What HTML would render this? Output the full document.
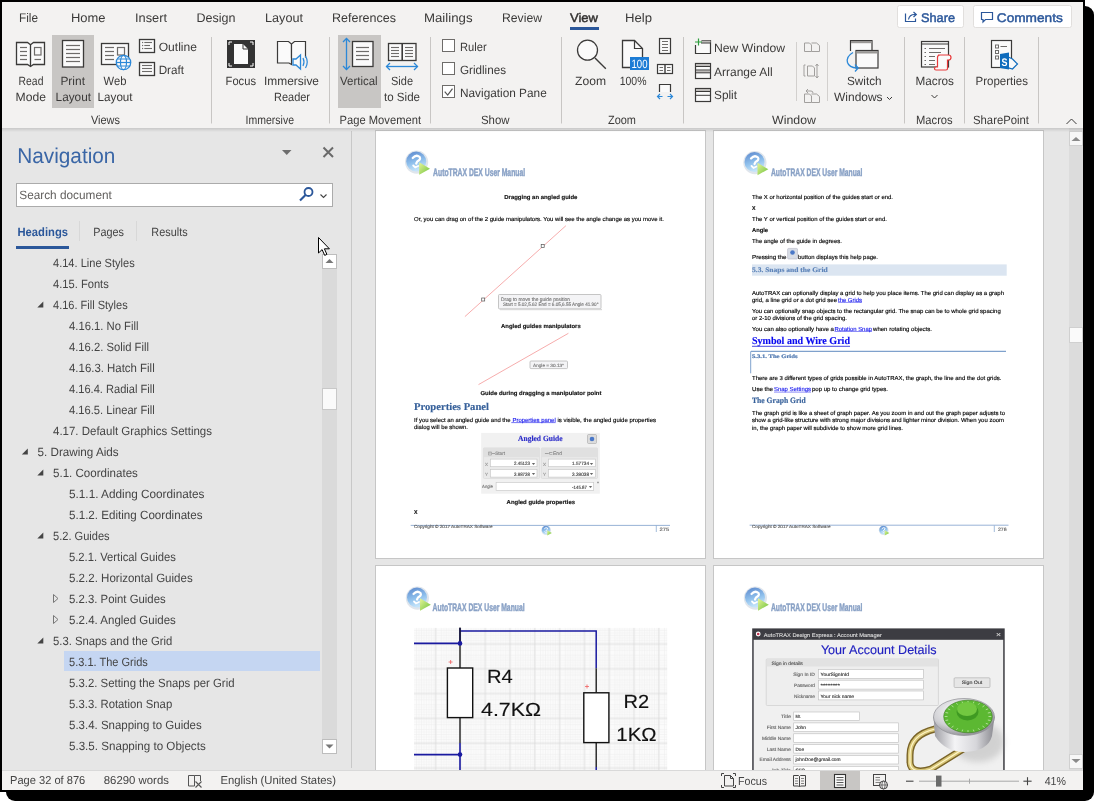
<!DOCTYPE html>
<html><head><meta charset="utf-8"><style>
html,body{margin:0;padding:0;background:#fff;width:1100px;height:807px;overflow:hidden}
svg{display:block;will-change:transform}
svg{font-family:"Liberation Sans",sans-serif}
</style></head><body>
<svg width="1100" height="807" viewBox="0 0 1100 807" text-rendering="geometricPrecision">
<defs><linearGradient id="rshadow" x1="0" y1="0" x2="0" y2="1"><stop offset="0" stop-color="#000" stop-opacity="0.13"/><stop offset="1" stop-color="#000" stop-opacity="0"/></linearGradient>
<linearGradient id="lgb" x1="0" y1="0" x2="0.3" y2="1"><stop offset="0" stop-color="#5a86cc"/><stop offset="0.6" stop-color="#8fc0ec"/><stop offset="1" stop-color="#c4e4fa"/></linearGradient>
<linearGradient id="lgg" x1="0" y1="0" x2="1" y2="1"><stop offset="0" stop-color="#e8f59a"/><stop offset="1" stop-color="#6cc23a"/></linearGradient>
<pattern id="gridp" x="414" y="627.9" width="24.8" height="24.8" patternUnits="userSpaceOnUse">
<rect width="24.8" height="24.8" fill="#fbfbfb"/>
<path d="M2.48 0V24.8M4.96 0V24.8M7.44 0V24.8M9.92 0V24.8M12.40 0V24.8M14.88 0V24.8M17.36 0V24.8M19.84 0V24.8M22.32 0V24.8M0 2.48H24.8M0 4.96H24.8M0 7.44H24.8M0 9.92H24.8M0 12.40H24.8M0 14.88H24.8M0 17.36H24.8M0 19.84H24.8M0 22.32H24.8" stroke="#ededed" stroke-width="0.5"/>
<path d="M21.6 0V24.8M0 16H24.8" stroke="#d8d8d8" stroke-width="0.7"/>
</pattern>
<radialGradient id="lockr" cx="0.4" cy="0.35" r="0.7"><stop offset="0" stop-color="#ffffff"/><stop offset="0.6" stop-color="#d0d0d4"/><stop offset="1" stop-color="#8a8a90"/></radialGradient>
<radialGradient id="lockg" cx="0.5" cy="0.45" r="0.6"><stop offset="0" stop-color="#8fd85a"/><stop offset="0.8" stop-color="#5cb832"/><stop offset="1" stop-color="#3e8a20"/></radialGradient>
<linearGradient id="lockbody" x1="0" y1="0" x2="1" y2="0"><stop offset="0" stop-color="#9c9ca2"/><stop offset="0.35" stop-color="#f4f4f6"/><stop offset="0.7" stop-color="#d6d6da"/><stop offset="1" stop-color="#8a8a90"/></linearGradient>
<filter id="blur3" x="-50%" y="-50%" width="200%" height="200%"><feGaussianBlur stdDeviation="3"/></filter>
</defs>
<rect x="0" y="0" width="1100" height="807" fill="#fff"/>
<rect x="6" y="6" width="1088" height="795" rx="9" ry="9" fill="#000"/>
<rect x="0" y="0" width="1085" height="792" fill="#000" />
<rect x="2" y="2" width="1081" height="126" fill="#f3f2f1" />
<text x="19" y="22" font-size="12.5" fill="#3b3a39" font-weight="normal" style="font-family:&quot;Liberation Sans&quot;" textLength="19.0" lengthAdjust="spacingAndGlyphs" >File</text>
<text x="71" y="22" font-size="12.5" fill="#3b3a39" font-weight="normal" style="font-family:&quot;Liberation Sans&quot;" textLength="34.5" lengthAdjust="spacingAndGlyphs" >Home</text>
<text x="135" y="22" font-size="12.5" fill="#3b3a39" font-weight="normal" style="font-family:&quot;Liberation Sans&quot;" textLength="32.0" lengthAdjust="spacingAndGlyphs" >Insert</text>
<text x="196.5" y="22" font-size="12.5" fill="#3b3a39" font-weight="normal" style="font-family:&quot;Liberation Sans&quot;" textLength="39.0" lengthAdjust="spacingAndGlyphs" >Design</text>
<text x="265" y="22" font-size="12.5" fill="#3b3a39" font-weight="normal" style="font-family:&quot;Liberation Sans&quot;" textLength="38.0" lengthAdjust="spacingAndGlyphs" >Layout</text>
<text x="332" y="22" font-size="12.5" fill="#3b3a39" font-weight="normal" style="font-family:&quot;Liberation Sans&quot;" textLength="64.0" lengthAdjust="spacingAndGlyphs" >References</text>
<text x="424" y="22" font-size="12.5" fill="#3b3a39" font-weight="normal" style="font-family:&quot;Liberation Sans&quot;" textLength="48.5" lengthAdjust="spacingAndGlyphs" >Mailings</text>
<text x="502" y="22" font-size="12.5" fill="#3b3a39" font-weight="normal" style="font-family:&quot;Liberation Sans&quot;" textLength="40.0" lengthAdjust="spacingAndGlyphs" >Review</text>
<text x="625" y="22" font-size="12.5" fill="#3b3a39" font-weight="normal" style="font-family:&quot;Liberation Sans&quot;" textLength="27.0" lengthAdjust="spacingAndGlyphs" >Help</text>
<text x="570" y="22" font-size="12.5" fill="#323130" font-weight="normal" style="font-family:&quot;Liberation Sans&quot;" textLength="28.0" lengthAdjust="spacingAndGlyphs" stroke="#323130" stroke-width="0.45">View</text>
<rect x="570" y="27" width="29" height="3" fill="#2b579a" />
<rect x="897.5" y="5.5" width="66" height="22" rx="2" fill="#fff" stroke="#e1dfdd" stroke-width="1"/>
<rect x="973.5" y="5.5" width="98" height="22" rx="2" fill="#fff" stroke="#e1dfdd" stroke-width="1"/>
<text x="921" y="21.5" font-size="12.5" fill="#2b579a" font-weight="normal" style="font-family:&quot;Liberation Sans&quot;" textLength="34.0" lengthAdjust="spacingAndGlyphs" stroke="#2b579a" stroke-width="0.45">Share</text>
<text x="996.8" y="21.5" font-size="12.5" fill="#2b579a" font-weight="normal" style="font-family:&quot;Liberation Sans&quot;" textLength="66.0" lengthAdjust="spacingAndGlyphs" stroke="#2b579a" stroke-width="0.45">Comments</text>
<path d="M905.5 13.5 v8 h10 v-3" fill="none" stroke="#2b579a" stroke-width="1.2"/>
<path d="M908.5 19.5 q1 -5 6 -5 h1.5 M913.5 12 l2.8 2.5 l-2.8 2.5" fill="none" stroke="#2b579a" stroke-width="1.2"/>
<path d="M981.5 12.5 h11 v7 h-7 l-2.5 2.5 v-2.5 h-1.5 z" fill="none" stroke="#2b579a" stroke-width="1.2"/>
<rect x="52" y="35" width="42" height="73" fill="#c8c6c4" />
<rect x="338" y="35" width="43" height="73" fill="#c8c6c4" />
<line x1="211.5" y1="37" x2="211.5" y2="123.5" stroke="#c8c6c4" stroke-width="1" />
<line x1="329.5" y1="37" x2="329.5" y2="123.5" stroke="#c8c6c4" stroke-width="1" />
<line x1="430.5" y1="37" x2="430.5" y2="123.5" stroke="#c8c6c4" stroke-width="1" />
<line x1="561.5" y1="37" x2="561.5" y2="123.5" stroke="#c8c6c4" stroke-width="1" />
<line x1="683.5" y1="37" x2="683.5" y2="123.5" stroke="#c8c6c4" stroke-width="1" />
<line x1="904.5" y1="37" x2="904.5" y2="123.5" stroke="#c8c6c4" stroke-width="1" />
<line x1="964.5" y1="37" x2="964.5" y2="123.5" stroke="#c8c6c4" stroke-width="1" />
<line x1="1038.5" y1="37" x2="1038.5" y2="123.5" stroke="#c8c6c4" stroke-width="1" />
<line x1="796.5" y1="42" x2="796.5" y2="101" stroke="#d2d0ce" stroke-width="1" />
<line x1="827.5" y1="42" x2="827.5" y2="101" stroke="#d2d0ce" stroke-width="1" />
<path d="M16.5 42.5 h11 l3 2.2 l3 -2.2 h11 v22 h-11 l-3 2 l-3 -2 h-11 z" fill="#fafafa" stroke="#3b3a39" stroke-width="1.3"/>
<line x1="30.5" y1="44.5" x2="30.5" y2="66" stroke="#3b3a39" stroke-width="1.3" />
<line x1="20" y1="47.5" x2="27" y2="47.5" stroke="#6e6c6a" stroke-width="1.2" />
<line x1="20" y1="51.5" x2="27" y2="51.5" stroke="#6e6c6a" stroke-width="1.2" />
<line x1="20" y1="55.5" x2="27" y2="55.5" stroke="#6e6c6a" stroke-width="1.2" />
<line x1="20" y1="59.5" x2="27" y2="59.5" stroke="#6e6c6a" stroke-width="1.2" />
<rect x="34.5" y="47.5" width="6.5" height="7.5" fill="none" stroke="#6e6c6a" stroke-width="1.2"/>
<line x1="34.5" y1="59.5" x2="41" y2="59.5" stroke="#6e6c6a" stroke-width="1.2" />
<rect x="62.5" y="40.5" width="21" height="26.5" fill="#fafafa" stroke="#3b3a39" stroke-width="1.3"/>
<line x1="66" y1="45.5" x2="80" y2="45.5" stroke="#6e6c6a" stroke-width="1.2" />
<line x1="66" y1="49.5" x2="80" y2="49.5" stroke="#6e6c6a" stroke-width="1.2" />
<line x1="66" y1="53.5" x2="80" y2="53.5" stroke="#6e6c6a" stroke-width="1.2" />
<line x1="66" y1="57.5" x2="80" y2="57.5" stroke="#6e6c6a" stroke-width="1.2" />
<line x1="66" y1="61.5" x2="80" y2="61.5" stroke="#6e6c6a" stroke-width="1.2" />
<rect x="101.5" y="43.5" width="27" height="21" fill="#fafafa" stroke="#3b3a39" stroke-width="1.3"/>
<line x1="105" y1="47.5" x2="114" y2="47.5" stroke="#6e6c6a" stroke-width="1.2" />
<line x1="105" y1="51.5" x2="114" y2="51.5" stroke="#6e6c6a" stroke-width="1.2" />
<line x1="105" y1="55.5" x2="114" y2="55.5" stroke="#6e6c6a" stroke-width="1.2" />
<line x1="105" y1="59.5" x2="114" y2="59.5" stroke="#6e6c6a" stroke-width="1.2" />
<rect x="117.5" y="47.5" width="7" height="7.5" fill="none" stroke="#6e6c6a" stroke-width="1.2"/>
<circle cx="123.5" cy="62.5" r="7.2" fill="#fafafa" stroke="#2b88d8" stroke-width="1.3"/>
<ellipse cx="123.5" cy="62.5" rx="3" ry="7.2" fill="none" stroke="#2b88d8" stroke-width="1.2"/>
<line x1="116.3" y1="62.5" x2="130.7" y2="62.5" stroke="#2b88d8" stroke-width="1.2" />
<line x1="117.5" y1="59" x2="129.5" y2="59" stroke="#2b88d8" stroke-width="1" />
<line x1="117.5" y1="66" x2="129.5" y2="66" stroke="#2b88d8" stroke-width="1" />
<rect x="139.5" y="39.5" width="15" height="13" fill="#fafafa" stroke="#3b3a39" stroke-width="1.3"/>
<line x1="144.3" y1="42.5" x2="152" y2="42.5" stroke="#6e6c6a" stroke-width="1.1" />
<rect x="142" y="41.9" width="1.2" height="1.2" fill="#6e6c6a" />
<line x1="144.3" y1="45.5" x2="150" y2="45.5" stroke="#6e6c6a" stroke-width="1.1" />
<rect x="142" y="44.9" width="1.2" height="1.2" fill="#6e6c6a" />
<line x1="144.3" y1="48.5" x2="152" y2="48.5" stroke="#6e6c6a" stroke-width="1.1" />
<rect x="142" y="47.9" width="1.2" height="1.2" fill="#6e6c6a" />
<rect x="139.5" y="62.5" width="15" height="13" fill="#fafafa" stroke="#3b3a39" stroke-width="1.3"/>
<line x1="142" y1="65.5" x2="152" y2="65.5" stroke="#6e6c6a" stroke-width="1.1" />
<line x1="142" y1="68.5" x2="152" y2="68.5" stroke="#6e6c6a" stroke-width="1.1" />
<line x1="142" y1="71.5" x2="152" y2="71.5" stroke="#6e6c6a" stroke-width="1.1" />
<text x="158.7" y="50.6" font-size="12" fill="#3b3a39" font-weight="normal" style="font-family:&quot;Liberation Sans&quot;" textLength="38.3" lengthAdjust="spacingAndGlyphs" >Outline</text>
<text x="158.7" y="73.7" font-size="12" fill="#3b3a39" font-weight="normal" style="font-family:&quot;Liberation Sans&quot;" textLength="25.3" lengthAdjust="spacingAndGlyphs" >Draft</text>
<text x="18.6" y="85" font-size="12" fill="#3b3a39" font-weight="normal" style="font-family:&quot;Liberation Sans&quot;" textLength="24.8" lengthAdjust="spacingAndGlyphs" >Read</text>
<text x="15.6" y="101" font-size="12" fill="#3b3a39" font-weight="normal" style="font-family:&quot;Liberation Sans&quot;" textLength="30.4" lengthAdjust="spacingAndGlyphs" >Mode</text>
<text x="60.4" y="85" font-size="12" fill="#3b3a39" font-weight="normal" style="font-family:&quot;Liberation Sans&quot;" textLength="24.6" lengthAdjust="spacingAndGlyphs" >Print</text>
<text x="55.6" y="101" font-size="12" fill="#3b3a39" font-weight="normal" style="font-family:&quot;Liberation Sans&quot;" textLength="35.4" lengthAdjust="spacingAndGlyphs" >Layout</text>
<text x="103.6" y="85" font-size="12" fill="#3b3a39" font-weight="normal" style="font-family:&quot;Liberation Sans&quot;" textLength="22.8" lengthAdjust="spacingAndGlyphs" >Web</text>
<text x="97.6" y="101" font-size="12" fill="#3b3a39" font-weight="normal" style="font-family:&quot;Liberation Sans&quot;" textLength="35.0" lengthAdjust="spacingAndGlyphs" >Layout</text>
<text x="91" y="124" font-size="12" fill="#3b3a39" font-weight="normal" style="font-family:&quot;Liberation Sans&quot;" textLength="29.0" lengthAdjust="spacingAndGlyphs" >Views</text>
<rect x="227" y="40" width="28" height="28" fill="#333" />
<path d="M234 44 h9 l5 5 v15 h-14 z" fill="#fafafa"/>
<path d="M243 44 v5 h5" fill="none" stroke="#333" stroke-width="1"/>
<path d="M229 45 v-3 h3" fill="none" stroke="#fff" stroke-width="1"/>
<path d="M253 45 v-3 h-3" fill="none" stroke="#fff" stroke-width="1"/>
<path d="M229 63 v3 h3" fill="none" stroke="#fff" stroke-width="1"/>
<path d="M253 63 v3 h-3" fill="none" stroke="#fff" stroke-width="1"/>
<path d="M277.5 41.5 h11 l3 2.5 v20.5 l-2.5 -1.5 h-11.5 z" fill="#fafafa" stroke="#3b3a39" stroke-width="1.2"/>
<path d="M291.5 58 v-14 l3 -2.5 h11 v16" fill="#fafafa" stroke="#3b3a39" stroke-width="1.2"/>
<path d="M293 59 h3 l4.5 -4 v14 l-4.5 -4 h-3 z" fill="#fafafa" stroke="#2b88d8" stroke-width="1.3"/>
<path d="M303 58 q2 4 0 8 M305.5 56 q3.5 6 0 12" fill="none" stroke="#2b88d8" stroke-width="1.2"/>
<text x="225.6" y="85" font-size="12" fill="#3b3a39" font-weight="normal" style="font-family:&quot;Liberation Sans&quot;" textLength="30.4" lengthAdjust="spacingAndGlyphs" >Focus</text>
<text x="264" y="85" font-size="12" fill="#3b3a39" font-weight="normal" style="font-family:&quot;Liberation Sans&quot;" textLength="55.0" lengthAdjust="spacingAndGlyphs" >Immersive</text>
<text x="274" y="101" font-size="12" fill="#3b3a39" font-weight="normal" style="font-family:&quot;Liberation Sans&quot;" textLength="36.0" lengthAdjust="spacingAndGlyphs" >Reader</text>
<text x="245.6" y="124" font-size="12" fill="#3b3a39" font-weight="normal" style="font-family:&quot;Liberation Sans&quot;" textLength="48.4" lengthAdjust="spacingAndGlyphs" >Immersive</text>
<line x1="346.5" y1="38.5" x2="346.5" y2="69.5" stroke="#2b88d8" stroke-width="1.3" />
<path d="M343 42 l3.5 -3.5 l3.5 3.5 M343 66 l3.5 3.5 l3.5 -3.5" fill="none" stroke="#2b88d8" stroke-width="1.3"/>
<rect x="352.5" y="41.5" width="20.5" height="25" fill="#fafafa" stroke="#3b3a39" stroke-width="1.3"/>
<line x1="356" y1="47.5" x2="369" y2="47.5" stroke="#6e6c6a" stroke-width="1.2" />
<line x1="356" y1="51.5" x2="369" y2="51.5" stroke="#6e6c6a" stroke-width="1.2" />
<line x1="356" y1="55.5" x2="369" y2="55.5" stroke="#6e6c6a" stroke-width="1.2" />
<line x1="356" y1="59.5" x2="369" y2="59.5" stroke="#6e6c6a" stroke-width="1.2" />
<rect x="388.5" y="43.5" width="27.5" height="17" fill="#fafafa" stroke="#3b3a39" stroke-width="1.3"/>
<line x1="402.2" y1="43.5" x2="402.2" y2="60.5" stroke="#3b3a39" stroke-width="1.6" />
<line x1="391" y1="47.5" x2="399" y2="47.5" stroke="#6e6c6a" stroke-width="1.1" />
<line x1="405" y1="47.5" x2="413" y2="47.5" stroke="#6e6c6a" stroke-width="1.1" />
<line x1="391" y1="50.5" x2="399" y2="50.5" stroke="#6e6c6a" stroke-width="1.1" />
<line x1="405" y1="50.5" x2="413" y2="50.5" stroke="#6e6c6a" stroke-width="1.1" />
<line x1="391" y1="53.5" x2="399" y2="53.5" stroke="#6e6c6a" stroke-width="1.1" />
<line x1="405" y1="53.5" x2="413" y2="53.5" stroke="#6e6c6a" stroke-width="1.1" />
<line x1="391" y1="56.5" x2="399" y2="56.5" stroke="#6e6c6a" stroke-width="1.1" />
<line x1="405" y1="56.5" x2="413" y2="56.5" stroke="#6e6c6a" stroke-width="1.1" />
<line x1="386.5" y1="66.5" x2="417.5" y2="66.5" stroke="#2b88d8" stroke-width="1.3" />
<path d="M390 63 l-3.5 3.5 l3.5 3.5 M414 63 l3.5 3.5 l-3.5 3.5" fill="none" stroke="#2b88d8" stroke-width="1.3"/>
<text x="340" y="85" font-size="12" fill="#3b3a39" font-weight="normal" style="font-family:&quot;Liberation Sans&quot;" textLength="37.6" lengthAdjust="spacingAndGlyphs" >Vertical</text>
<text x="391" y="85" font-size="12" fill="#3b3a39" font-weight="normal" style="font-family:&quot;Liberation Sans&quot;" textLength="22.0" lengthAdjust="spacingAndGlyphs" >Side</text>
<text x="384" y="101" font-size="12" fill="#3b3a39" font-weight="normal" style="font-family:&quot;Liberation Sans&quot;" textLength="36.0" lengthAdjust="spacingAndGlyphs" >to Side</text>
<text x="339.6" y="124" font-size="12" fill="#3b3a39" font-weight="normal" style="font-family:&quot;Liberation Sans&quot;" textLength="81.4" lengthAdjust="spacingAndGlyphs" >Page Movement</text>
<rect x="442.5" y="39.5" width="12" height="12" fill="#fff" stroke="#6e6c6a" stroke-width="1"/>
<rect x="442.5" y="62.5" width="12" height="12" fill="#fff" stroke="#6e6c6a" stroke-width="1"/>
<rect x="442.5" y="85.5" width="12" height="12" fill="#fff" stroke="#6e6c6a" stroke-width="1"/>
<path d="M444.7 91.7 l3 3.4 l4.8 -6.5" fill="none" stroke="#555" stroke-width="1.2"/>
<text x="460" y="51" font-size="12" fill="#3b3a39" font-weight="normal" style="font-family:&quot;Liberation Sans&quot;" textLength="26.7" lengthAdjust="spacingAndGlyphs" >Ruler</text>
<text x="460" y="74" font-size="12" fill="#3b3a39" font-weight="normal" style="font-family:&quot;Liberation Sans&quot;" textLength="46.0" lengthAdjust="spacingAndGlyphs" >Gridlines</text>
<text x="460" y="97" font-size="12" fill="#3b3a39" font-weight="normal" style="font-family:&quot;Liberation Sans&quot;" textLength="86.7" lengthAdjust="spacingAndGlyphs" >Navigation Pane</text>
<text x="481" y="124" font-size="12" fill="#3b3a39" font-weight="normal" style="font-family:&quot;Liberation Sans&quot;" textLength="28.6" lengthAdjust="spacingAndGlyphs" >Show</text>
<circle cx="587.5" cy="50.2" r="10" fill="#fafafa" stroke="#3b3a39" stroke-width="1.3"/>
<line x1="595" y1="58" x2="605.8" y2="68.8" stroke="#3b3a39" stroke-width="1.4" />
<path d="M622.5 40.5 h12 l8 8 v19 h-20 z" fill="#fafafa" stroke="#3b3a39" stroke-width="1.3"/>
<path d="M634.5 40.5 v8 h8" fill="none" stroke="#3b3a39" stroke-width="1.2"/>
<rect x="630" y="57" width="19" height="13" fill="#1c7cd5" />
<text x="631.5" y="68.3" font-size="12" fill="#fff" font-weight="normal" style="font-family:&quot;Liberation Sans&quot;" textLength="16.0" lengthAdjust="spacingAndGlyphs" >100</text>
<text x="575" y="85" font-size="12" fill="#3b3a39" font-weight="normal" style="font-family:&quot;Liberation Sans&quot;" textLength="31.0" lengthAdjust="spacingAndGlyphs" >Zoom</text>
<text x="619.7" y="85" font-size="12" fill="#3b3a39" font-weight="normal" style="font-family:&quot;Liberation Sans&quot;" textLength="26.8" lengthAdjust="spacingAndGlyphs" >100%</text>
<rect x="659.5" y="38.5" width="11" height="15" fill="#fafafa" stroke="#3b3a39" stroke-width="1.2"/>
<line x1="662" y1="41.5" x2="668" y2="41.5" stroke="#6e6c6a" stroke-width="1" />
<line x1="662" y1="44.5" x2="668" y2="44.5" stroke="#6e6c6a" stroke-width="1" />
<line x1="662" y1="47.5" x2="668" y2="47.5" stroke="#6e6c6a" stroke-width="1" />
<line x1="662" y1="50.5" x2="668" y2="50.5" stroke="#6e6c6a" stroke-width="1" />
<rect x="657.5" y="64.5" width="15" height="9" fill="#fafafa" stroke="#3b3a39" stroke-width="1.2"/>
<line x1="665" y1="64.5" x2="665" y2="73.5" stroke="#3b3a39" stroke-width="1.4" />
<line x1="659.5" y1="67.5" x2="663" y2="67.5" stroke="#6e6c6a" stroke-width="1" />
<line x1="667" y1="67.5" x2="670.5" y2="67.5" stroke="#6e6c6a" stroke-width="1" />
<line x1="659.5" y1="70.5" x2="663" y2="70.5" stroke="#6e6c6a" stroke-width="1" />
<line x1="667" y1="70.5" x2="670.5" y2="70.5" stroke="#6e6c6a" stroke-width="1" />
<path d="M659.5 92 v-7.5 h11 v7.5" fill="#fafafa" stroke="#3b3a39" stroke-width="1.2"/>
<path d="M657.5 96.5 h5 M660 94 l-2.5 2.5 l2.5 2.5 M667.5 96.5 h5 M670 94 l2.5 2.5 l-2.5 2.5" fill="none" stroke="#2b88d8" stroke-width="1.2"/>
<text x="608" y="124" font-size="12" fill="#3b3a39" font-weight="normal" style="font-family:&quot;Liberation Sans&quot;" textLength="28.0" lengthAdjust="spacingAndGlyphs" >Zoom</text>
<path d="M695.5 45 v8.5 h15 v-13 h-9" fill="#fafafa" stroke="#3b3a39" stroke-width="1.2"/>
<rect x="701" y="40.6" width="9.5" height="2" fill="#bdbbb9" />
<line x1="701" y1="43" x2="710.5" y2="43" stroke="#3b3a39" stroke-width="1" />
<path d="M698.5 38.5 v7 M695 42 h7" fill="none" stroke="#2e9e3e" stroke-width="1.2"/>
<rect x="695.5" y="63.5" width="15" height="15" fill="#fafafa" stroke="#3b3a39" stroke-width="1.2"/>
<rect x="696" y="64" width="14" height="2.5" fill="#bdbbb9" />
<line x1="695.5" y1="66.5" x2="710.5" y2="66.5" stroke="#3b3a39" stroke-width="1" />
<rect x="696" y="70.5" width="14" height="2" fill="#bdbbb9" />
<line x1="695.5" y1="70" x2="710.5" y2="70" stroke="#3b3a39" stroke-width="1" />
<line x1="695.5" y1="72.8" x2="710.5" y2="72.8" stroke="#3b3a39" stroke-width="1" />
<rect x="695.5" y="88.5" width="15" height="13" fill="#fafafa" stroke="#3b3a39" stroke-width="1.2"/>
<rect x="696" y="89" width="14" height="2.3" fill="#bdbbb9" />
<line x1="695.5" y1="91.5" x2="710.5" y2="91.5" stroke="#3b3a39" stroke-width="1" />
<line x1="695.5" y1="95.3" x2="710.5" y2="95.3" stroke="#3b3a39" stroke-width="1" />
<text x="714" y="51.5" font-size="12" fill="#3b3a39" font-weight="normal" style="font-family:&quot;Liberation Sans&quot;" textLength="71.0" lengthAdjust="spacingAndGlyphs" >New Window</text>
<text x="714" y="75.6" font-size="12" fill="#3b3a39" font-weight="normal" style="font-family:&quot;Liberation Sans&quot;" textLength="58.6" lengthAdjust="spacingAndGlyphs" >Arrange All</text>
<text x="714" y="99" font-size="12" fill="#3b3a39" font-weight="normal" style="font-family:&quot;Liberation Sans&quot;" textLength="23.0" lengthAdjust="spacingAndGlyphs" >Split</text>
<path d="M804.5 43 h5 l2 2 v6.5 h-7 z M811.5 43 h5 l3 2.5 v6 h-8" fill="none" stroke="#a19f9d" stroke-width="1"/>
<path d="M805.5 65 h-1.5 v11 h1.5 M807.5 66 h5 l2 2 v8 h-7 z M817 64 v14 M815.5 66 l1.5 -2 l1.5 2 M815.5 76 l1.5 2 l1.5 -2" fill="none" stroke="#a19f9d" stroke-width="1"/>
<path d="M804.5 94 h5 l2 2 v6.5 h-7 z M811.5 94 h5 l3 2.5 v6 h-8 M806 91 h5 q2 0 2 2 M806 91 l2 -2 M806 91 l2 2" fill="none" stroke="#a19f9d" stroke-width="1"/>
<path d="M850.5 51 v-10.5 h21.5 v9.5" fill="#fafafa" stroke="#3b3a39" stroke-width="1.2"/>
<rect x="851" y="41" width="20.5" height="2.2" fill="#9a9896" />
<rect x="856" y="50.5" width="22" height="17.5" fill="#fafafa" stroke="#3b3a39" stroke-width="1.2"/>
<rect x="856.6" y="51.1" width="20.8" height="2.4" fill="#9a9896" />
<path d="M853 52.5 q-7 4 -5.5 10 q1.5 5 9.5 5.5" fill="none" stroke="#2b88d8" stroke-width="1.3"/>
<path d="M855 64.5 l3.2 3.5 l-3.2 3.5" fill="none" stroke="#2b88d8" stroke-width="1.3"/>
<text x="847" y="85" font-size="12" fill="#3b3a39" font-weight="normal" style="font-family:&quot;Liberation Sans&quot;" textLength="34.6" lengthAdjust="spacingAndGlyphs" >Switch</text>
<text x="834" y="101" font-size="12" fill="#3b3a39" font-weight="normal" style="font-family:&quot;Liberation Sans&quot;" textLength="48.6" lengthAdjust="spacingAndGlyphs" >Windows</text>
<path d="M887 97 l2.5 2.5 l2.5 -2.5" fill="none" stroke="#3b3a39" stroke-width="1"/>
<text x="772" y="124" font-size="12" fill="#3b3a39" font-weight="normal" style="font-family:&quot;Liberation Sans&quot;" textLength="44.0" lengthAdjust="spacingAndGlyphs" >Window</text>
<rect x="921.5" y="41.5" width="27" height="25.5" fill="#fafafa" stroke="#3b3a39" stroke-width="1.2"/>
<line x1="921.5" y1="44" x2="948.5" y2="44" stroke="#3b3a39" stroke-width="1" />
<line x1="924.5" y1="48.5" x2="926" y2="48.5" stroke="#6e6c6a" stroke-width="1" />
<line x1="929" y1="48.5" x2="945" y2="48.5" stroke="#6e6c6a" stroke-width="1" />
<line x1="924.5" y1="52.5" x2="926" y2="52.5" stroke="#6e6c6a" stroke-width="1" />
<line x1="929" y1="52.5" x2="941" y2="52.5" stroke="#6e6c6a" stroke-width="1" />
<line x1="924.5" y1="56.5" x2="926" y2="56.5" stroke="#6e6c6a" stroke-width="1" />
<line x1="929" y1="56.5" x2="935" y2="56.5" stroke="#6e6c6a" stroke-width="1" />
<line x1="924.5" y1="60.5" x2="926" y2="60.5" stroke="#6e6c6a" stroke-width="1" />
<line x1="929" y1="60.5" x2="935" y2="60.5" stroke="#6e6c6a" stroke-width="1" />
<line x1="924.5" y1="64.5" x2="926" y2="64.5" stroke="#6e6c6a" stroke-width="1" />
<line x1="929" y1="64.5" x2="935" y2="64.5" stroke="#6e6c6a" stroke-width="1" />
<path d="M938 55 h10.5 q2.5 0 2.5 2.5 q0 2.5 -2.5 2.5 h-1 v8.5 q0 1.5 -1.5 1.5 h-10 q-1.5 0 -1.5 -1.5 q0 -1.5 1.5 -1.5 h1.5 v-9.5 q0 -2.5 2.5 -2.5" fill="#fafafa" stroke="#e8393a" stroke-width="1.2"/>
<text x="915.5" y="85" font-size="12" fill="#3b3a39" font-weight="normal" style="font-family:&quot;Liberation Sans&quot;" textLength="38.5" lengthAdjust="spacingAndGlyphs" >Macros</text>
<path d="M931.5 95 l3 3 l3 -3" fill="none" stroke="#3b3a39" stroke-width="1"/>
<text x="916" y="124" font-size="12" fill="#3b3a39" font-weight="normal" style="font-family:&quot;Liberation Sans&quot;" textLength="36.7" lengthAdjust="spacingAndGlyphs" >Macros</text>
<rect x="991.5" y="40.5" width="20" height="27" fill="#fafafa" stroke="#3b3a39" stroke-width="1.2"/>
<rect x="995.5" y="45" width="3" height="3" fill="none" stroke="#6e6c6a" stroke-width="1"/>
<rect x="995.5" y="50.5" width="3" height="3" fill="none" stroke="#6e6c6a" stroke-width="1"/>
<rect x="995.5" y="56" width="3" height="3" fill="none" stroke="#6e6c6a" stroke-width="1"/>
<line x1="1000.5" y1="46.5" x2="1007" y2="46.5" stroke="#6e6c6a" stroke-width="1" />
<path d="M1006 56 l6.5 3 l5 5 l-5 5 l-6.5 -2 z" fill="#fafafa" stroke="#0f6cbd" stroke-width="1.2"/>
<path d="M1000 54 l9 -1.5 v17 l-9 -1.5 z" fill="#0f6cbd"/>
<text x="1001.5" y="66" font-size="11" fill="#fff" font-weight="bold" style="font-family:&quot;Liberation Sans&quot;" textLength="6.0" lengthAdjust="spacingAndGlyphs" >S</text>
<text x="975.5" y="85" font-size="12" fill="#3b3a39" font-weight="normal" style="font-family:&quot;Liberation Sans&quot;" textLength="52.5" lengthAdjust="spacingAndGlyphs" >Properties</text>
<text x="973" y="124" font-size="12" fill="#3b3a39" font-weight="normal" style="font-family:&quot;Liberation Sans&quot;" textLength="56.0" lengthAdjust="spacingAndGlyphs" >SharePoint</text>
<path d="M1066.5 124 l5 -5 l5 5" fill="none" stroke="#3b3a39" stroke-width="1"/>
<rect x="2" y="128" width="350" height="642" fill="#e6e6e6" />
<line x1="351.5" y1="131" x2="351.5" y2="768" stroke="#c8c8c8" stroke-width="1" />
<text x="17.2" y="163" font-size="21.5" fill="#3a66a6" font-weight="normal" style="font-family:&quot;Liberation Sans&quot;" textLength="98.2" lengthAdjust="spacingAndGlyphs" >Navigation</text>
<path d="M282 150 h9.5 l-4.75 5 z" fill="#6e6e6e"/>
<path d="M323.5 147.5 l9.5 9.5 M333 147.5 l-9.5 9.5" fill="none" stroke="#6a6a6a" stroke-width="2"/>
<rect x="16.5" y="183.5" width="316" height="23" fill="#fff" stroke="#ababab" stroke-width="1"/>
<text x="19.3" y="199.2" font-size="12" fill="#605e5c" font-weight="normal" style="font-family:&quot;Liberation Sans&quot;" textLength="92.5" lengthAdjust="spacingAndGlyphs" >Search document</text>
<circle cx="308.5" cy="192" r="4" fill="none" stroke="#2b579a" stroke-width="1.8"/>
<line x1="305.5" y1="195" x2="300" y2="200.5" stroke="#2b579a" stroke-width="2.2" />
<path d="M320.5 194.5 l3 3 l3 -3" fill="none" stroke="#444" stroke-width="1.1"/>
<text x="17.5" y="236" font-size="12" fill="#2b579a" font-weight="bold" style="font-family:&quot;Liberation Sans&quot;" textLength="50.5" lengthAdjust="spacingAndGlyphs" >Headings</text>
<text x="93.3" y="236" font-size="12" fill="#444" font-weight="normal" style="font-family:&quot;Liberation Sans&quot;" textLength="30.7" lengthAdjust="spacingAndGlyphs" >Pages</text>
<text x="151.3" y="236" font-size="12" fill="#444" font-weight="normal" style="font-family:&quot;Liberation Sans&quot;" textLength="36.3" lengthAdjust="spacingAndGlyphs" >Results</text>
<line x1="79.5" y1="221" x2="79.5" y2="241" stroke="#d8d8d8" stroke-width="1" />
<line x1="136.5" y1="221" x2="136.5" y2="241" stroke="#d8d8d8" stroke-width="1" />
<rect x="16" y="246" width="53" height="3" fill="#2b579a" />
<rect x="322" y="254" width="15" height="500" fill="#dadada" />
<rect x="322.5" y="254.5" width="14" height="14" fill="#fff" stroke="#bdbdbd" stroke-width="1"/>
<path d="M325.5 263 h8 l-4 -4 z" fill="#777"/>
<rect x="322.5" y="739.5" width="14" height="14" fill="#fff" stroke="#bdbdbd" stroke-width="1"/>
<path d="M325.5 744.5 h8 l-4 4 z" fill="#777"/>
<rect x="322.5" y="388.5" width="14" height="21" fill="#fafafa" stroke="#c8c8c8" stroke-width="1"/>
<rect x="64" y="651" width="256" height="20" fill="#c5d6f2" />
<text x="53" y="267" font-size="12" fill="#444" font-weight="normal" style="font-family:&quot;Liberation Sans&quot;" textLength="81.7" lengthAdjust="spacingAndGlyphs" >4.14. Line Styles</text>
<text x="53" y="288" font-size="12" fill="#444" font-weight="normal" style="font-family:&quot;Liberation Sans&quot;" textLength="55.8" lengthAdjust="spacingAndGlyphs" >4.15. Fonts</text>
<text x="53" y="309" font-size="12" fill="#444" font-weight="normal" style="font-family:&quot;Liberation Sans&quot;" textLength="74.7" lengthAdjust="spacingAndGlyphs" >4.16. Fill Styles</text>
<path d="M43.3 301.5 v6 h-6 z" fill="#444"/>
<text x="69" y="330" font-size="12" fill="#444" font-weight="normal" style="font-family:&quot;Liberation Sans&quot;" textLength="69.5" lengthAdjust="spacingAndGlyphs" >4.16.1. No Fill</text>
<text x="69" y="351" font-size="12" fill="#444" font-weight="normal" style="font-family:&quot;Liberation Sans&quot;" textLength="79.9" lengthAdjust="spacingAndGlyphs" >4.16.2. Solid Fill</text>
<text x="69" y="372" font-size="12" fill="#444" font-weight="normal" style="font-family:&quot;Liberation Sans&quot;" textLength="85.7" lengthAdjust="spacingAndGlyphs" >4.16.3. Hatch Fill</text>
<text x="69" y="393" font-size="12" fill="#444" font-weight="normal" style="font-family:&quot;Liberation Sans&quot;" textLength="85.7" lengthAdjust="spacingAndGlyphs" >4.16.4. Radial Fill</text>
<text x="69" y="414" font-size="12" fill="#444" font-weight="normal" style="font-family:&quot;Liberation Sans&quot;" textLength="85.7" lengthAdjust="spacingAndGlyphs" >4.16.5. Linear Fill</text>
<text x="53" y="435" font-size="12" fill="#444" font-weight="normal" style="font-family:&quot;Liberation Sans&quot;" textLength="159.0" lengthAdjust="spacingAndGlyphs" >4.17. Default Graphics Settings</text>
<text x="37.5" y="456" font-size="12" fill="#444" font-weight="normal" style="font-family:&quot;Liberation Sans&quot;" textLength="81.1" lengthAdjust="spacingAndGlyphs" >5. Drawing Aids</text>
<path d="M27.8 448.5 v6 h-6 z" fill="#444"/>
<text x="53" y="477" font-size="12" fill="#444" font-weight="normal" style="font-family:&quot;Liberation Sans&quot;" textLength="84.9" lengthAdjust="spacingAndGlyphs" >5.1. Coordinates</text>
<path d="M43.3 469.5 v6 h-6 z" fill="#444"/>
<text x="69" y="498" font-size="12" fill="#444" font-weight="normal" style="font-family:&quot;Liberation Sans&quot;" textLength="135.5" lengthAdjust="spacingAndGlyphs" >5.1.1. Adding Coordinates</text>
<text x="69" y="519" font-size="12" fill="#444" font-weight="normal" style="font-family:&quot;Liberation Sans&quot;" textLength="133.6" lengthAdjust="spacingAndGlyphs" >5.1.2. Editing Coordinates</text>
<text x="53" y="540" font-size="12" fill="#444" font-weight="normal" style="font-family:&quot;Liberation Sans&quot;" textLength="56.6" lengthAdjust="spacingAndGlyphs" >5.2. Guides</text>
<path d="M43.3 532.5 v6 h-6 z" fill="#444"/>
<text x="69" y="561" font-size="12" fill="#444" font-weight="normal" style="font-family:&quot;Liberation Sans&quot;" textLength="106.8" lengthAdjust="spacingAndGlyphs" >5.2.1. Vertical Guides</text>
<text x="69" y="582" font-size="12" fill="#444" font-weight="normal" style="font-family:&quot;Liberation Sans&quot;" textLength="123.7" lengthAdjust="spacingAndGlyphs" >5.2.2. Horizontal Guides</text>
<text x="69" y="603" font-size="12" fill="#444" font-weight="normal" style="font-family:&quot;Liberation Sans&quot;" textLength="96.7" lengthAdjust="spacingAndGlyphs" >5.2.3. Point Guides</text>
<path d="M53.5 594.5 l4.5 4 l-4.5 4 z" fill="none" stroke="#777" stroke-width="1"/>
<text x="69" y="624" font-size="12" fill="#444" font-weight="normal" style="font-family:&quot;Liberation Sans&quot;" textLength="106.8" lengthAdjust="spacingAndGlyphs" >5.2.4. Angled Guides</text>
<path d="M53.5 615.5 l4.5 4 l-4.5 4 z" fill="none" stroke="#777" stroke-width="1"/>
<text x="53" y="645" font-size="12" fill="#444" font-weight="normal" style="font-family:&quot;Liberation Sans&quot;" textLength="119.2" lengthAdjust="spacingAndGlyphs" >5.3. Snaps and the Grid</text>
<path d="M43.3 637.5 v6 h-6 z" fill="#444"/>
<text x="69" y="666" font-size="12" fill="#444" font-weight="normal" style="font-family:&quot;Liberation Sans&quot;" textLength="78.8" lengthAdjust="spacingAndGlyphs" >5.3.1. The Grids</text>
<text x="69" y="687" font-size="12" fill="#444" font-weight="normal" style="font-family:&quot;Liberation Sans&quot;" textLength="165.5" lengthAdjust="spacingAndGlyphs" >5.3.2. Setting the Snaps per Grid</text>
<text x="69" y="708" font-size="12" fill="#444" font-weight="normal" style="font-family:&quot;Liberation Sans&quot;" textLength="103.2" lengthAdjust="spacingAndGlyphs" >5.3.3. Rotation Snap</text>
<text x="69" y="729" font-size="12" fill="#444" font-weight="normal" style="font-family:&quot;Liberation Sans&quot;" textLength="132.7" lengthAdjust="spacingAndGlyphs" >5.3.4. Snapping to Guides</text>
<text x="69" y="750" font-size="12" fill="#444" font-weight="normal" style="font-family:&quot;Liberation Sans&quot;" textLength="136.7" lengthAdjust="spacingAndGlyphs" >5.3.5. Snapping to Objects</text>
<path d="M318.5 237.5 v15.5 l3.6 -3.4 l2.6 5.8 l2.2 -1 l-2.5 -5.6 h5 z" fill="#fff" stroke="#000" stroke-width="1"/>
<rect x="352" y="128" width="717" height="642" fill="#e6e6e6" />
<rect x="375.5" y="130.5" width="330" height="428" fill="#fff" stroke="#c6c6c6" stroke-width="1"/>
<rect x="713.5" y="130.5" width="330" height="428" fill="#fff" stroke="#c6c6c6" stroke-width="1"/>
<rect x="375.5" y="565.5" width="330" height="206" fill="#fff" stroke="#c6c6c6" stroke-width="1"/>
<rect x="713.5" y="565.5" width="330" height="206" fill="#fff" stroke="#c6c6c6" stroke-width="1"/>
<circle cx="416.59999999999997" cy="162.1" r="11.6" fill="#dfe5ec"/>
<circle cx="416.2" cy="161.5" r="10.0" fill="url(#lgb)"/>
<path d="M412.7 158.0 q3.5 -4.0 7.0 -1.0 q1.5 2.5 -2.5 4.5 l-1.0 2.0" fill="none" stroke="#fff" stroke-width="2.2" stroke-linecap="round"/>
<path d="M413.2 165.5 l2.0 2.0 l3.0 -1.5" fill="none" stroke="#fff" stroke-width="1.8" stroke-linecap="round"/>
<path d="M419.2 162.3 l10.8 6.4 l-10.8 6.0 z" fill="url(#lgg)"/>
<text x="433.1" y="175.9" font-size="10.8" font-weight="bold" fill="#8aa2c6" stroke="#8aa2c6" stroke-width="0.45" textLength="92" lengthAdjust="spacingAndGlyphs" style="font-family:&quot;Liberation Sans&quot;">AutoTRAX DEX User Manual</text>
<text x="504.3" y="199" font-size="5.8" fill="#111" font-weight="bold" style="font-family:&quot;Liberation Sans&quot;" textLength="73.1" lengthAdjust="spacingAndGlyphs" stroke="#111" stroke-width="0.14">Dragging an angled guide</text>
<text x="414" y="220.6" font-size="5.8" fill="#000" font-weight="normal" style="font-family:&quot;Liberation Sans&quot;" textLength="249.9" lengthAdjust="spacingAndGlyphs" stroke="#000" stroke-width="0.14">Or, you can drag on of the 2 guide manipulators. You will see the angle change as you move it.</text>
<line x1="464.9" y1="316.6" x2="565.9" y2="225.7" stroke="#f5a3a3" stroke-width="0.9" />
<rect x="541.2" y="244.6" width="3" height="3" fill="#fff" stroke="#555" stroke-width="0.7"/>
<rect x="481.7" y="298" width="3" height="3" fill="#fff" stroke="#555" stroke-width="0.7"/>
<rect x="498.5" y="294.5" width="102.5" height="14.4" rx="1" fill="#f4f4f6" stroke="#b8b8b8" stroke-width="0.8"/>
<rect x="500" y="309" width="102" height="1.2" fill="#d8d8d8"/>
<text x="501" y="300.8" font-size="5" fill="#7a7a7a" font-weight="normal" style="font-family:&quot;Liberation Sans&quot;" textLength="69.0" lengthAdjust="spacingAndGlyphs" stroke="#7a7a7a" stroke-width="0.14">Drag to move the guide position</text>
<text x="503" y="306.4" font-size="5" fill="#7a7a7a" font-weight="normal" style="font-family:&quot;Liberation Sans&quot;" textLength="95.5" lengthAdjust="spacingAndGlyphs" stroke="#7a7a7a" stroke-width="0.14">Start = 5.02,5.62 End = 6.05,6.55 Angle 41.90°</text>
<text x="501" y="328" font-size="5.8" fill="#111" font-weight="bold" style="font-family:&quot;Liberation Sans&quot;" textLength="79.7" lengthAdjust="spacingAndGlyphs" stroke="#111" stroke-width="0.14">Angled guides manipulators</text>
<line x1="478.5" y1="384.6" x2="568.4" y2="333.3" stroke="#f5a3a3" stroke-width="0.9" />
<rect x="530" y="361" width="37.5" height="7.6" rx="1" fill="#f4f4f6" stroke="#b8b8b8" stroke-width="0.8"/>
<text x="533" y="366.5" font-size="4.6" fill="#7a7a7a" font-weight="normal" style="font-family:&quot;Liberation Sans&quot;" textLength="31.0" lengthAdjust="spacingAndGlyphs" stroke="#7a7a7a" stroke-width="0.14">Angle = 30.13°</text>
<text x="480.4" y="394.8" font-size="5.8" fill="#111" font-weight="bold" style="font-family:&quot;Liberation Sans&quot;" textLength="121.1" lengthAdjust="spacingAndGlyphs" stroke="#111" stroke-width="0.14">Guide during dragging a manipulator point</text>
<text x="414" y="410.2" font-size="10.5" fill="#36609a" font-weight="bold" style="font-family:&quot;Liberation Serif&quot;" textLength="75.0" lengthAdjust="spacingAndGlyphs" stroke="#36609a" stroke-width="0.14">Properties Panel</text>
<text x="414" y="421.6" font-size="5.8" fill="#000" font-weight="normal" style="font-family:&quot;Liberation Sans&quot;" textLength="96.6" lengthAdjust="spacingAndGlyphs" stroke="#000" stroke-width="0.14">If you select an angled guide and the</text>
<text x="512.5" y="421.6" font-size="5.8" fill="#1a1aee" font-weight="normal" style="font-family:&quot;Liberation Sans&quot;" textLength="43.2" lengthAdjust="spacingAndGlyphs" stroke="#1a1aee" stroke-width="0.14">Properties panel</text>
<line x1="511.3" y1="422.6" x2="555.7" y2="422.6" stroke="#1a1aee" stroke-width="0.6" />
<text x="557.5" y="421.6" font-size="5.8" fill="#000" font-weight="normal" style="font-family:&quot;Liberation Sans&quot;" textLength="98.5" lengthAdjust="spacingAndGlyphs" stroke="#000" stroke-width="0.14">is visible, the angled guide properties</text>
<text x="414" y="428.8" font-size="5.8" fill="#000" font-weight="normal" style="font-family:&quot;Liberation Sans&quot;" textLength="54.0" lengthAdjust="spacingAndGlyphs" stroke="#000" stroke-width="0.14">dialog will be shown.</text>
<rect x="481.2" y="432.9" width="118.6" height="60.8" fill="#f1f1f1" />
<text x="518.1" y="441.2" font-size="8" fill="#2a2ac8" font-weight="bold" style="font-family:&quot;Liberation Serif&quot;" textLength="44.4" lengthAdjust="spacingAndGlyphs" stroke="#2a2ac8" stroke-width="0.14">Angled Guide</text>
<rect x="587.5" y="434.5" width="9" height="9" rx="1" fill="#dcdcdc" stroke="#a8a8a8" stroke-width="0.6"/>
<circle cx="592" cy="439" r="2.3" fill="#4a78c8"/>
<rect x="483.4" y="447.9" width="56.2" height="30.6" rx="1" fill="#e9e9e9" stroke="#d6d6d6" stroke-width="0.6"/>
<rect x="483.4" y="447.9" width="56.2" height="9.2" fill="#e0e0e0" />
<rect x="541.3" y="447.9" width="56.2" height="30.6" rx="1" fill="#e9e9e9" stroke="#d6d6d6" stroke-width="0.6"/>
<rect x="541.3" y="447.9" width="56.2" height="9.2" fill="#e0e0e0" />
<text x="488" y="455" font-size="5" fill="#888" font-weight="normal" style="font-family:&quot;Liberation Sans&quot;" textLength="17.0" lengthAdjust="spacingAndGlyphs" stroke="#888" stroke-width="0.14">⊡─Start</text>
<text x="545" y="455" font-size="5" fill="#888" font-weight="normal" style="font-family:&quot;Liberation Sans&quot;" textLength="17.0" lengthAdjust="spacingAndGlyphs" stroke="#888" stroke-width="0.14">─⊂End</text>
<rect x="490.4" y="459.1" width="46.60000000000002" height="7.6" fill="#fff" stroke="#c4c4c4" stroke-width="0.6"/>
<rect x="490.4" y="469.5" width="46.60000000000002" height="7.6" fill="#fff" stroke="#c4c4c4" stroke-width="0.6"/>
<rect x="548.5" y="459.1" width="46.89999999999998" height="7.6" fill="#fff" stroke="#c4c4c4" stroke-width="0.6"/>
<rect x="548.5" y="469.5" width="46.89999999999998" height="7.6" fill="#fff" stroke="#c4c4c4" stroke-width="0.6"/>
<text x="485" y="465.5" font-size="4.5" fill="#999" font-weight="normal" style="font-family:&quot;Liberation Sans&quot;" textLength="3.0" lengthAdjust="spacingAndGlyphs" stroke="#999" stroke-width="0.14">X</text>
<text x="485" y="475.5" font-size="4.5" fill="#999" font-weight="normal" style="font-family:&quot;Liberation Sans&quot;" textLength="3.0" lengthAdjust="spacingAndGlyphs" stroke="#999" stroke-width="0.14">Y</text>
<text x="543" y="465.5" font-size="4.5" fill="#999" font-weight="normal" style="font-family:&quot;Liberation Sans&quot;" textLength="3.0" lengthAdjust="spacingAndGlyphs" stroke="#999" stroke-width="0.14">X</text>
<text x="543" y="475.5" font-size="4.5" fill="#999" font-weight="normal" style="font-family:&quot;Liberation Sans&quot;" textLength="3.0" lengthAdjust="spacingAndGlyphs" stroke="#999" stroke-width="0.14">Y</text>
<text x="514" y="465.2" font-size="4.8" fill="#444" font-weight="normal" style="font-family:&quot;Liberation Sans&quot;" textLength="16.0" lengthAdjust="spacingAndGlyphs" stroke="#444" stroke-width="0.14">2.45123</text>
<text x="532" y="465" font-size="4" fill="#666" font-weight="normal" style="font-family:&quot;Liberation Sans&quot;" textLength="3.0" lengthAdjust="spacingAndGlyphs" stroke="#666" stroke-width="0.14">▾</text>
<text x="514" y="475.6" font-size="4.8" fill="#444" font-weight="normal" style="font-family:&quot;Liberation Sans&quot;" textLength="16.0" lengthAdjust="spacingAndGlyphs" stroke="#444" stroke-width="0.14">3.98738</text>
<text x="532" y="475.4" font-size="4" fill="#666" font-weight="normal" style="font-family:&quot;Liberation Sans&quot;" textLength="3.0" lengthAdjust="spacingAndGlyphs" stroke="#666" stroke-width="0.14">▾</text>
<text x="572" y="465.2" font-size="4.8" fill="#444" font-weight="normal" style="font-family:&quot;Liberation Sans&quot;" textLength="17.0" lengthAdjust="spacingAndGlyphs" stroke="#444" stroke-width="0.14">1.57734</text>
<text x="590" y="465" font-size="4" fill="#666" font-weight="normal" style="font-family:&quot;Liberation Sans&quot;" textLength="3.0" lengthAdjust="spacingAndGlyphs" stroke="#666" stroke-width="0.14">▾</text>
<text x="572" y="475.6" font-size="4.8" fill="#444" font-weight="normal" style="font-family:&quot;Liberation Sans&quot;" textLength="17.0" lengthAdjust="spacingAndGlyphs" stroke="#444" stroke-width="0.14">3.39038</text>
<text x="590" y="475.4" font-size="4" fill="#666" font-weight="normal" style="font-family:&quot;Liberation Sans&quot;" textLength="3.0" lengthAdjust="spacingAndGlyphs" stroke="#666" stroke-width="0.14">▾</text>
<rect x="496.1" y="482.3" width="97.6" height="8.2" fill="#fff" stroke="#c4c4c4" stroke-width="0.6"/>
<text x="482.1" y="488" font-size="4.5" fill="#777" font-weight="normal" style="font-family:&quot;Liberation Sans&quot;" textLength="10.8" lengthAdjust="spacingAndGlyphs" stroke="#777" stroke-width="0.14">Angle</text>
<text x="572" y="488.5" font-size="4.8" fill="#444" font-weight="normal" style="font-family:&quot;Liberation Sans&quot;" textLength="15.0" lengthAdjust="spacingAndGlyphs" stroke="#444" stroke-width="0.14">-145.67</text>
<text x="589" y="488.3" font-size="4" fill="#666" font-weight="normal" style="font-family:&quot;Liberation Sans&quot;" textLength="3.0" lengthAdjust="spacingAndGlyphs" stroke="#666" stroke-width="0.14">▾</text>
<text x="597" y="485" font-size="4.5" fill="#666" font-weight="normal" style="font-family:&quot;Liberation Sans&quot;" textLength="2.0" lengthAdjust="spacingAndGlyphs" stroke="#666" stroke-width="0.14">°</text>
<text x="506.6" y="504.2" font-size="5.8" fill="#111" font-weight="bold" style="font-family:&quot;Liberation Sans&quot;" textLength="68.4" lengthAdjust="spacingAndGlyphs" stroke="#111" stroke-width="0.14">Angled guide properties</text>
<text x="414" y="514.2" font-size="5.6" fill="#111" font-weight="bold" style="font-family:&quot;Liberation Sans&quot;" textLength="3.5" lengthAdjust="spacingAndGlyphs" stroke="#111" stroke-width="0.14">X</text>
<line x1="410.7" y1="525.4" x2="670" y2="525.4" stroke="#7da0cc" stroke-width="0.8" />
<text x="414" y="527.8" font-size="4.4" fill="#606060" font-weight="normal" style="font-family:&quot;Liberation Sans&quot;" textLength="78.5" lengthAdjust="spacingAndGlyphs" stroke="#606060" stroke-width="0.14">Copyright © 2017 AutoTRAX Software</text>
<circle cx="546.168" cy="530.252" r="4.872" fill="#dfe5ec"/>
<circle cx="546" cy="530" r="4.2" fill="url(#lgb)"/>
<path d="M544.53 528.53 q1.47 -1.68 2.94 -0.42 q0.63 1.05 -1.05 1.89 l-0.42 0.84" fill="none" stroke="#fff" stroke-width="0.924" stroke-linecap="round"/>
<path d="M544.74 531.68 l0.84 0.84 l1.26 -0.63" fill="none" stroke="#fff" stroke-width="0.756" stroke-linecap="round"/>
<path d="M547.26 530.336 l4.5360000000000005 2.688 l-4.5360000000000005 2.52 z" fill="url(#lgg)"/>
<line x1="656.3" y1="525.5" x2="656.3" y2="532" stroke="#7da0cc" stroke-width="0.7" />
<text x="659.4" y="530.6" font-size="4.8" fill="#666" font-weight="normal" style="font-family:&quot;Liberation Sans&quot;" textLength="9.8" lengthAdjust="spacingAndGlyphs" stroke="#666" stroke-width="0.14">275</text>
<circle cx="754.9" cy="162.6" r="11.6" fill="#dfe5ec"/>
<circle cx="754.5" cy="162" r="10.0" fill="url(#lgb)"/>
<path d="M751.0 158.5 q3.5 -4.0 7.0 -1.0 q1.5 2.5 -2.5 4.5 l-1.0 2.0" fill="none" stroke="#fff" stroke-width="2.2" stroke-linecap="round"/>
<path d="M751.5 166.0 l2.0 2.0 l3.0 -1.5" fill="none" stroke="#fff" stroke-width="1.8" stroke-linecap="round"/>
<path d="M757.5 162.8 l10.8 6.4 l-10.8 6.0 z" fill="url(#lgg)"/>
<text x="771" y="175.9" font-size="10.8" font-weight="bold" fill="#8aa2c6" stroke="#8aa2c6" stroke-width="0.45" textLength="91.4" lengthAdjust="spacingAndGlyphs" style="font-family:&quot;Liberation Sans&quot;">AutoTRAX DEX User Manual</text>
<text x="752" y="198.8" font-size="5.8" fill="#000" font-weight="normal" style="font-family:&quot;Liberation Sans&quot;" textLength="141.0" lengthAdjust="spacingAndGlyphs" stroke="#000" stroke-width="0.14">The X or horizontal position of the guides start or end.</text>
<text x="752" y="210" font-size="5.6" fill="#111" font-weight="bold" style="font-family:&quot;Liberation Sans&quot;" textLength="3.5" lengthAdjust="spacingAndGlyphs" stroke="#111" stroke-width="0.14">X</text>
<text x="752" y="220.7" font-size="5.8" fill="#000" font-weight="normal" style="font-family:&quot;Liberation Sans&quot;" textLength="134.9" lengthAdjust="spacingAndGlyphs" stroke="#000" stroke-width="0.14">The Y or vertical position of the guides start or end.</text>
<text x="752" y="232" font-size="5.8" fill="#111" font-weight="bold" style="font-family:&quot;Liberation Sans&quot;" textLength="16.0" lengthAdjust="spacingAndGlyphs" stroke="#111" stroke-width="0.14">Angle</text>
<text x="752" y="242.7" font-size="5.8" fill="#000" font-weight="normal" style="font-family:&quot;Liberation Sans&quot;" textLength="89.8" lengthAdjust="spacingAndGlyphs" stroke="#000" stroke-width="0.14">The angle of the guide in degrees.</text>
<text x="752" y="258.7" font-size="5.8" fill="#000" font-weight="normal" style="font-family:&quot;Liberation Sans&quot;" textLength="34.5" lengthAdjust="spacingAndGlyphs" stroke="#000" stroke-width="0.14">Pressing the</text>
<rect x="787.6" y="248.4" width="9.9" height="10.6" rx="1" fill="#d8dde6" stroke="#aab" stroke-width="0.5"/>
<circle cx="792.5" cy="252.5" r="2.3" fill="#4a78c8"/>
<text x="798" y="258.7" font-size="5.8" fill="#000" font-weight="normal" style="font-family:&quot;Liberation Sans&quot;" textLength="80.0" lengthAdjust="spacingAndGlyphs" stroke="#000" stroke-width="0.14">button displays this help page.</text>
<rect x="752" y="264.4" width="254.7" height="11.3" fill="#dbe5f1" />
<text x="752" y="272" font-size="7" fill="#5b82b8" font-weight="bold" style="font-family:&quot;Liberation Serif&quot;" textLength="75.7" lengthAdjust="spacingAndGlyphs" stroke="#5b82b8" stroke-width="0.14">5.3.  Snaps and the Grid</text>
<text x="752" y="294.5" font-size="5.8" fill="#000" font-weight="normal" style="font-family:&quot;Liberation Sans&quot;" textLength="252.0" lengthAdjust="spacingAndGlyphs" stroke="#000" stroke-width="0.14">AutoTRAX can optionally display a grid to help you place items. The grid can display as a graph</text>
<text x="752" y="301.6" font-size="5.8" fill="#000" font-weight="normal" style="font-family:&quot;Liberation Sans&quot;" textLength="85.0" lengthAdjust="spacingAndGlyphs" stroke="#000" stroke-width="0.14">grid, a line grid or a dot grid see</text>
<text x="838" y="301.6" font-size="5.8" fill="#1a1aee" font-weight="normal" style="font-family:&quot;Liberation Sans&quot;" textLength="24.0" lengthAdjust="spacingAndGlyphs" stroke="#1a1aee" stroke-width="0.14">the Grids</text>
<line x1="838" y1="302.4" x2="862" y2="302.4" stroke="#1a1aee" stroke-width="0.5" />
<text x="752" y="313" font-size="5.8" fill="#000" font-weight="normal" style="font-family:&quot;Liberation Sans&quot;" textLength="248.7" lengthAdjust="spacingAndGlyphs" stroke="#000" stroke-width="0.14">You can optionally snap objects to the rectangular grid. The snap can be to whole grid spacing</text>
<text x="752" y="320.1" font-size="5.8" fill="#000" font-weight="normal" style="font-family:&quot;Liberation Sans&quot;" textLength="95.0" lengthAdjust="spacingAndGlyphs" stroke="#000" stroke-width="0.14">or 2-10 divisions of the grid spacing.</text>
<text x="752" y="330.7" font-size="5.8" fill="#000" font-weight="normal" style="font-family:&quot;Liberation Sans&quot;" textLength="82.0" lengthAdjust="spacingAndGlyphs" stroke="#000" stroke-width="0.14">You can also optionally have a</text>
<text x="834.5" y="330.7" font-size="5.8" fill="#1a1aee" font-weight="normal" style="font-family:&quot;Liberation Sans&quot;" textLength="37.5" lengthAdjust="spacingAndGlyphs" stroke="#1a1aee" stroke-width="0.14">Rotation Snap</text>
<line x1="834.5" y1="331.5" x2="872" y2="331.5" stroke="#1a1aee" stroke-width="0.5" />
<text x="873" y="330.7" font-size="5.8" fill="#000" font-weight="normal" style="font-family:&quot;Liberation Sans&quot;" textLength="59.0" lengthAdjust="spacingAndGlyphs" stroke="#000" stroke-width="0.14">when rotating objects.</text>
<text x="752" y="344.2" font-size="10.5" fill="#0a0af0" font-weight="bold" style="font-family:&quot;Liberation Serif&quot;" textLength="98.0" lengthAdjust="spacingAndGlyphs" stroke="#0a0af0" stroke-width="0.14">Symbol and Wire Grid</text>
<line x1="752" y1="346.3" x2="850" y2="346.3" stroke="#1a1ad8" stroke-width="0.8" />
<line x1="751" y1="351.3" x2="1006" y2="351.3" stroke="#5f8ac0" stroke-width="1" />
<line x1="750.7" y1="351.3" x2="750.7" y2="373.3" stroke="#5f8ac0" stroke-width="0.8" />
<text x="752" y="358.4" font-size="5.4" fill="#4f78b0" font-weight="bold" style="font-family:&quot;Liberation Serif&quot;" textLength="45.5" lengthAdjust="spacingAndGlyphs" stroke="#4f78b0" stroke-width="0.2">5.3.1.   The Grids</text>
<text x="752" y="380" font-size="5.8" fill="#000" font-weight="normal" style="font-family:&quot;Liberation Sans&quot;" textLength="249.4" lengthAdjust="spacingAndGlyphs" stroke="#000" stroke-width="0.14">There are 3 different types of grids possible in AutoTRAX, the graph, the line and the dot grids.</text>
<text x="752" y="391.3" font-size="5.8" fill="#000" font-weight="normal" style="font-family:&quot;Liberation Sans&quot;" textLength="21.0" lengthAdjust="spacingAndGlyphs" stroke="#000" stroke-width="0.14">Use the</text>
<text x="774" y="391.3" font-size="5.8" fill="#1a1aee" font-weight="normal" style="font-family:&quot;Liberation Sans&quot;" textLength="37.0" lengthAdjust="spacingAndGlyphs" stroke="#1a1aee" stroke-width="0.14">Snap Settings</text>
<line x1="774" y1="392.1" x2="811" y2="392.1" stroke="#1a1aee" stroke-width="0.5" />
<text x="812" y="391.3" font-size="5.8" fill="#000" font-weight="normal" style="font-family:&quot;Liberation Sans&quot;" textLength="76.0" lengthAdjust="spacingAndGlyphs" stroke="#000" stroke-width="0.14">pop up to change grid types.</text>
<text x="752" y="402.7" font-size="8.2" fill="#36609a" font-weight="bold" style="font-family:&quot;Liberation Serif&quot;" textLength="53.7" lengthAdjust="spacingAndGlyphs" stroke="#36609a" stroke-width="0.14">The Graph Grid</text>
<text x="752" y="415.3" font-size="5.8" fill="#000" font-weight="normal" style="font-family:&quot;Liberation Sans&quot;" textLength="253.0" lengthAdjust="spacingAndGlyphs" stroke="#000" stroke-width="0.14">The graph grid is like a sheet of graph paper. As you zoom in and out the graph paper adjusts to</text>
<text x="752" y="422.4" font-size="5.8" fill="#000" font-weight="normal" style="font-family:&quot;Liberation Sans&quot;" textLength="252.0" lengthAdjust="spacingAndGlyphs" stroke="#000" stroke-width="0.14">show a grid-like structure with strong major divisions and lighter minor division. When you zoom</text>
<text x="752" y="429.5" font-size="5.8" fill="#000" font-weight="normal" style="font-family:&quot;Liberation Sans&quot;" textLength="151.0" lengthAdjust="spacingAndGlyphs" stroke="#000" stroke-width="0.14">in, the graph paper will subdivide to show more grid lines.</text>
<line x1="749.6" y1="525.2" x2="1008.5" y2="525.2" stroke="#7da0cc" stroke-width="0.8" />
<text x="752" y="527.8" font-size="4.4" fill="#606060" font-weight="normal" style="font-family:&quot;Liberation Sans&quot;" textLength="78.5" lengthAdjust="spacingAndGlyphs" stroke="#606060" stroke-width="0.14">Copyright © 2017 AutoTRAX Software</text>
<circle cx="883.668" cy="530.252" r="4.872" fill="#dfe5ec"/>
<circle cx="883.5" cy="530" r="4.2" fill="url(#lgb)"/>
<path d="M882.03 528.53 q1.47 -1.68 2.94 -0.42 q0.63 1.05 -1.05 1.89 l-0.42 0.84" fill="none" stroke="#fff" stroke-width="0.924" stroke-linecap="round"/>
<path d="M882.24 531.68 l0.84 0.84 l1.26 -0.63" fill="none" stroke="#fff" stroke-width="0.756" stroke-linecap="round"/>
<path d="M884.76 530.336 l4.5360000000000005 2.688 l-4.5360000000000005 2.52 z" fill="url(#lgg)"/>
<line x1="994.3" y1="525.5" x2="994.3" y2="532" stroke="#7da0cc" stroke-width="0.7" />
<text x="997.9" y="531" font-size="4.8" fill="#666" font-weight="normal" style="font-family:&quot;Liberation Sans&quot;" textLength="8.8" lengthAdjust="spacingAndGlyphs" stroke="#666" stroke-width="0.14">276</text>
<circle cx="417.4" cy="598.1" r="11.6" fill="#dfe5ec"/>
<circle cx="417" cy="597.5" r="10.0" fill="url(#lgb)"/>
<path d="M413.5 594.0 q3.5 -4.0 7.0 -1.0 q1.5 2.5 -2.5 4.5 l-1.0 2.0" fill="none" stroke="#fff" stroke-width="2.2" stroke-linecap="round"/>
<path d="M414.0 601.5 l2.0 2.0 l3.0 -1.5" fill="none" stroke="#fff" stroke-width="1.8" stroke-linecap="round"/>
<path d="M420.0 598.3 l10.8 6.4 l-10.8 6.0 z" fill="url(#lgg)"/>
<text x="432.6" y="610.5" font-size="10.8" font-weight="bold" fill="#8aa2c6" stroke="#8aa2c6" stroke-width="0.45" textLength="92" lengthAdjust="spacingAndGlyphs" style="font-family:&quot;Liberation Sans&quot;">AutoTRAX DEX User Manual</text>
<clipPath id="clip3"><rect x="376" y="566" width="329" height="204"/></clipPath>
<g clip-path="url(#clip3)">
<rect x="414" y="627.9" width="253.2" height="160" fill="url(#gridp)"/>
<path d="M414 643.4 H460 M460 628 V643.4" fill="none" stroke="#1a1aa0" stroke-width="1.6"/>
<path d="M460 631 H596.2 V668.3" fill="none" stroke="#1a1aa0" stroke-width="1.5"/>
<path d="M460 627.5 V668 M460 717.6 V743" fill="none" stroke="#111" stroke-width="1.3"/>
<path d="M460 743 V790 M414 754.6 H460" fill="none" stroke="#1a1aa0" stroke-width="1.6"/>
<circle cx="460" cy="643.4" r="2.3" fill="#1a1aa0"/>
<circle cx="460" cy="754.6" r="2.3" fill="#1a1aa0"/>
<rect x="447.4" y="668" width="25.3" height="49.6" fill="#fff" stroke="#111" stroke-width="1.4"/>
<path d="M448.6 662 h4 M450.6 660 v4" stroke="#f06060" stroke-width="0.8"/>
<text x="486.9" y="683.4" font-size="19" fill="#111" font-weight="normal" style="font-family:&quot;Liberation Sans&quot;" textLength="25.8" lengthAdjust="spacingAndGlyphs" stroke="#111" stroke-width="0.14">R4</text>
<text x="481" y="716.3" font-size="19" fill="#111" font-weight="normal" style="font-family:&quot;Liberation Sans&quot;" textLength="60.0" lengthAdjust="spacingAndGlyphs" stroke="#111" stroke-width="0.14">4.7KΩ</text>
<path d="M596.2 668.3 V692.8 M596.2 742.6 V767" fill="none" stroke="#111" stroke-width="1.3"/>
<path d="M596.2 767 V790" fill="none" stroke="#1a1aa0" stroke-width="1.5"/>
<rect x="583.8" y="692.8" width="25.1" height="49.8" fill="#fff" stroke="#111" stroke-width="1.4"/>
<path d="M585 686.5 h4 M587 684.5 v4" stroke="#f06060" stroke-width="0.8"/>
<text x="623.5" y="707.7" font-size="19" fill="#111" font-weight="normal" style="font-family:&quot;Liberation Sans&quot;" textLength="25.7" lengthAdjust="spacingAndGlyphs" stroke="#111" stroke-width="0.14">R2</text>
<text x="616.3" y="740.7" font-size="19" fill="#111" font-weight="normal" style="font-family:&quot;Liberation Sans&quot;" textLength="40.3" lengthAdjust="spacingAndGlyphs" stroke="#111" stroke-width="0.14">1KΩ</text>
</g>
<circle cx="755.4" cy="598.1" r="11.6" fill="#dfe5ec"/>
<circle cx="755" cy="597.5" r="10.0" fill="url(#lgb)"/>
<path d="M751.5 594.0 q3.5 -4.0 7.0 -1.0 q1.5 2.5 -2.5 4.5 l-1.0 2.0" fill="none" stroke="#fff" stroke-width="2.2" stroke-linecap="round"/>
<path d="M752.0 601.5 l2.0 2.0 l3.0 -1.5" fill="none" stroke="#fff" stroke-width="1.8" stroke-linecap="round"/>
<path d="M758.0 598.3 l10.8 6.4 l-10.8 6.0 z" fill="url(#lgg)"/>
<text x="771" y="611" font-size="10.8" font-weight="bold" fill="#8aa2c6" stroke="#8aa2c6" stroke-width="0.45" textLength="91.4" lengthAdjust="spacingAndGlyphs" style="font-family:&quot;Liberation Sans&quot;">AutoTRAX DEX User Manual</text>
<clipPath id="clip4"><rect x="714" y="566" width="329" height="204"/></clipPath>
<g clip-path="url(#clip4)">
<rect x="752.2" y="628.4" width="252.5" height="150" fill="#3c3c42" />
<rect x="753.7" y="639.8" width="249.5" height="140" fill="#f0f0f0" />
<circle cx="758.2" cy="634" r="2.4" fill="#fff"/><circle cx="758.2" cy="634" r="1.3" fill="#c03050"/>
<text x="763.8" y="636.6" font-size="5.5" fill="#d8d8d8" font-weight="normal" style="font-family:&quot;Liberation Sans&quot;" textLength="118.0" lengthAdjust="spacingAndGlyphs" stroke="#d8d8d8" stroke-width="0.14">AutoTRAX Design Express : Account Manager</text>
<text x="996" y="636.6" font-size="7" fill="#ccc" font-weight="normal" style="font-family:&quot;Liberation Sans&quot;" textLength="5.0" lengthAdjust="spacingAndGlyphs" stroke="#ccc" stroke-width="0.14">×</text>
<text x="820.9" y="653.7" font-size="12.5" fill="#2020c0" font-weight="normal" style="font-family:&quot;Liberation Sans&quot;" textLength="115.6" lengthAdjust="spacingAndGlyphs" stroke="#2020c0" stroke-width="0.14">Your Account Details</text>
<rect x="766.2" y="659" width="172.2" height="46.5" rx="1" fill="#eeeeee" stroke="#cfcfcf" stroke-width="0.7"/>
<rect x="766.6" y="659.4" width="171.4" height="7.1" fill="#e2e2e2" />
<text x="771.5" y="665" font-size="4.8" fill="#555" font-weight="normal" style="font-family:&quot;Liberation Sans&quot;" textLength="31.3" lengthAdjust="spacingAndGlyphs" stroke="#555" stroke-width="0.14">Sign in details</text>
<text x="793.2" y="675.9" font-size="4.8" fill="#666" font-weight="normal" style="font-family:&quot;Liberation Sans&quot;" textLength="21.7" lengthAdjust="spacingAndGlyphs" stroke="#666" stroke-width="0.14">Sign In ID</text>
<rect x="818.5" y="669.4" width="104.8" height="8.9" fill="#fff" stroke="#bdbdbd" stroke-width="0.6"/>
<text x="820.5" y="675.9" font-size="4.8" fill="#333" font-weight="normal" style="font-family:&quot;Liberation Sans&quot;" textLength="28.5" lengthAdjust="spacingAndGlyphs" stroke="#333" stroke-width="0.14">YourSignInId</text>
<text x="794" y="686.7" font-size="4.8" fill="#666" font-weight="normal" style="font-family:&quot;Liberation Sans&quot;" textLength="20.9" lengthAdjust="spacingAndGlyphs" stroke="#666" stroke-width="0.14">Password</text>
<rect x="818.5" y="680.2" width="104.8" height="8.9" fill="#fff" stroke="#bdbdbd" stroke-width="0.6"/>
<text x="820.5" y="686.7" font-size="4.8" fill="#333" font-weight="normal" style="font-family:&quot;Liberation Sans&quot;" textLength="19.5" lengthAdjust="spacingAndGlyphs" stroke="#333" stroke-width="0.14">********</text>
<text x="794" y="697.6" font-size="4.8" fill="#666" font-weight="normal" style="font-family:&quot;Liberation Sans&quot;" textLength="20.9" lengthAdjust="spacingAndGlyphs" stroke="#666" stroke-width="0.14">Nickname</text>
<rect x="818.5" y="691" width="104.8" height="8.9" fill="#fff" stroke="#bdbdbd" stroke-width="0.6"/>
<text x="820.5" y="697.6" font-size="4.8" fill="#333" font-weight="normal" style="font-family:&quot;Liberation Sans&quot;" textLength="33.5" lengthAdjust="spacingAndGlyphs" stroke="#333" stroke-width="0.14">Your nick name</text>
<rect x="954.1" y="677.8" width="35.9" height="9.7" rx="1" fill="#e6e6e6" stroke="#a8a8a8" stroke-width="0.6"/>
<text x="961.8" y="684.4" font-size="4.8" fill="#444" font-weight="normal" style="font-family:&quot;Liberation Sans&quot;" textLength="20.5" lengthAdjust="spacingAndGlyphs" stroke="#444" stroke-width="0.14">Sign Out</text>
<text x="781.1" y="718" font-size="4.8" fill="#666" font-weight="normal" style="font-family:&quot;Liberation Sans&quot;" textLength="9.7" lengthAdjust="spacingAndGlyphs" stroke="#666" stroke-width="0.14">Title</text>
<rect x="793.7" y="712" width="65.7" height="8.5" fill="#fff" stroke="#bdbdbd" stroke-width="0.6"/>
<text x="795.5" y="718" font-size="4.8" fill="#333" font-weight="normal" style="font-family:&quot;Liberation Sans&quot;" textLength="5.5" lengthAdjust="spacingAndGlyphs" stroke="#333" stroke-width="0.14">Mr.</text>
<text x="766.7" y="728.9" font-size="4.8" fill="#666" font-weight="normal" style="font-family:&quot;Liberation Sans&quot;" textLength="24.1" lengthAdjust="spacingAndGlyphs" stroke="#666" stroke-width="0.14">First Name</text>
<rect x="793.7" y="722.9" width="104.8" height="8.5" fill="#fff" stroke="#bdbdbd" stroke-width="0.6"/>
<text x="795.5" y="728.9" font-size="4.8" fill="#333" font-weight="normal" style="font-family:&quot;Liberation Sans&quot;" textLength="10.5" lengthAdjust="spacingAndGlyphs" stroke="#333" stroke-width="0.14">John</text>
<text x="761.9" y="739.7" font-size="4.8" fill="#666" font-weight="normal" style="font-family:&quot;Liberation Sans&quot;" textLength="28.9" lengthAdjust="spacingAndGlyphs" stroke="#666" stroke-width="0.14">Middle Name</text>
<rect x="793.7" y="733.8" width="104.8" height="8.5" fill="#fff" stroke="#bdbdbd" stroke-width="0.6"/>
<text x="766.7" y="750.6" font-size="4.8" fill="#666" font-weight="normal" style="font-family:&quot;Liberation Sans&quot;" textLength="24.1" lengthAdjust="spacingAndGlyphs" stroke="#666" stroke-width="0.14">Last Name</text>
<rect x="793.7" y="744.6" width="104.8" height="8.5" fill="#fff" stroke="#bdbdbd" stroke-width="0.6"/>
<text x="795.5" y="750.6" font-size="4.8" fill="#333" font-weight="normal" style="font-family:&quot;Liberation Sans&quot;" textLength="8.5" lengthAdjust="spacingAndGlyphs" stroke="#333" stroke-width="0.14">Doe</text>
<text x="759.5" y="761.4" font-size="4.8" fill="#666" font-weight="normal" style="font-family:&quot;Liberation Sans&quot;" textLength="31.3" lengthAdjust="spacingAndGlyphs" stroke="#666" stroke-width="0.14">Email Address</text>
<rect x="793.7" y="755.5" width="104.8" height="8.5" fill="#fff" stroke="#bdbdbd" stroke-width="0.6"/>
<text x="795.5" y="761.4" font-size="4.8" fill="#333" font-weight="normal" style="font-family:&quot;Liberation Sans&quot;" textLength="45.1" lengthAdjust="spacingAndGlyphs" stroke="#333" stroke-width="0.14">johnDoe@gmail.com</text>
<text x="771" y="772.2" font-size="4.8" fill="#666" font-weight="normal" style="font-family:&quot;Liberation Sans&quot;" textLength="19.8" lengthAdjust="spacingAndGlyphs" stroke="#666" stroke-width="0.14">Job Title</text>
<rect x="793.7" y="766.3" width="104.8" height="8.5" fill="#fff" stroke="#bdbdbd" stroke-width="0.6"/>
<text x="795.5" y="772.2" font-size="4.8" fill="#333" font-weight="normal" style="font-family:&quot;Liberation Sans&quot;" textLength="9.5" lengthAdjust="spacingAndGlyphs" stroke="#333" stroke-width="0.14">CEO</text>
<ellipse cx="978" cy="742" rx="26" ry="20" fill="#9a9a9a" opacity="0.35" filter="url(#blur3)"/>
<path d="M935 729 C918 733 910 742 910 755 L910 762 C910 771 919 773 931 769 L968 746" fill="none" stroke="#7a6428" stroke-width="7"/>
<path d="M935 729 C918 733 910 742 910 755 L910 762 C910 771 919 773 931 769 L968 746" fill="none" stroke="#d8c678" stroke-width="4.2"/>
<path d="M935 729 C918 733 910 742 910 755 L910 762 C910 771 919 773 931 769 L968 746" fill="none" stroke="#fff6c8" stroke-width="1.2"/>
<path d="M933.5 717 L935 736 Q945 752 965 752 Q988 751 992 736 L994.5 717 z" fill="url(#lockbody)"/>
<ellipse cx="964" cy="717" rx="30.5" ry="18.5" fill="url(#lockr)" stroke="#8e8e94" stroke-width="0.7"/>
<ellipse cx="968" cy="716.5" rx="24.3" ry="16.3" fill="#5cb832" stroke="#3a7a20" stroke-width="0.6"/>
<line x1="988.5" y1="716.5" x2="991.3" y2="716.5" stroke="#e8f8d8" stroke-width="0.6"/>
<line x1="987.8" y1="720.0" x2="990.5" y2="720.5" stroke="#e8f8d8" stroke-width="0.6"/>
<line x1="985.8" y1="723.3" x2="988.2" y2="724.2" stroke="#e8f8d8" stroke-width="0.6"/>
<line x1="982.5" y1="726.1" x2="984.5" y2="727.5" stroke="#e8f8d8" stroke-width="0.6"/>
<line x1="978.2" y1="728.3" x2="979.6" y2="729.9" stroke="#e8f8d8" stroke-width="0.6"/>
<line x1="973.3" y1="729.6" x2="974.0" y2="731.5" stroke="#e8f8d8" stroke-width="0.6"/>
<line x1="968.0" y1="730.1" x2="968.0" y2="732.0" stroke="#e8f8d8" stroke-width="0.6"/>
<line x1="962.7" y1="729.6" x2="962.0" y2="731.5" stroke="#e8f8d8" stroke-width="0.6"/>
<line x1="957.8" y1="728.3" x2="956.4" y2="729.9" stroke="#e8f8d8" stroke-width="0.6"/>
<line x1="953.5" y1="726.1" x2="951.5" y2="727.5" stroke="#e8f8d8" stroke-width="0.6"/>
<line x1="950.2" y1="723.3" x2="947.8" y2="724.2" stroke="#e8f8d8" stroke-width="0.6"/>
<line x1="948.2" y1="720.0" x2="945.5" y2="720.5" stroke="#e8f8d8" stroke-width="0.6"/>
<line x1="947.5" y1="716.5" x2="944.7" y2="716.5" stroke="#e8f8d8" stroke-width="0.6"/>
<line x1="948.2" y1="713.0" x2="945.5" y2="712.5" stroke="#e8f8d8" stroke-width="0.6"/>
<line x1="950.2" y1="709.7" x2="947.8" y2="708.8" stroke="#e8f8d8" stroke-width="0.6"/>
<line x1="953.5" y1="706.9" x2="951.5" y2="705.5" stroke="#e8f8d8" stroke-width="0.6"/>
<line x1="957.8" y1="704.7" x2="956.4" y2="703.1" stroke="#e8f8d8" stroke-width="0.6"/>
<line x1="962.7" y1="703.4" x2="962.0" y2="701.5" stroke="#e8f8d8" stroke-width="0.6"/>
<line x1="968.0" y1="702.9" x2="968.0" y2="701.0" stroke="#e8f8d8" stroke-width="0.6"/>
<line x1="973.3" y1="703.4" x2="974.0" y2="701.5" stroke="#e8f8d8" stroke-width="0.6"/>
<line x1="978.2" y1="704.7" x2="979.6" y2="703.1" stroke="#e8f8d8" stroke-width="0.6"/>
<line x1="982.5" y1="706.9" x2="984.5" y2="705.5" stroke="#e8f8d8" stroke-width="0.6"/>
<line x1="985.8" y1="709.7" x2="988.2" y2="708.8" stroke="#e8f8d8" stroke-width="0.6"/>
<line x1="987.8" y1="713.0" x2="990.5" y2="712.5" stroke="#e8f8d8" stroke-width="0.6"/>
<ellipse cx="967.5" cy="712" rx="11" ry="8.5" fill="#3f9a22"/>
<ellipse cx="967" cy="709" rx="10" ry="7" fill="#72c840"/>
</g>
<rect x="1069" y="128" width="14" height="642" fill="#dcdcdc" />
<rect x="1069.5" y="131.5" width="13" height="14" fill="#f7f7f7" stroke="#d0d0d0" stroke-width="1"/>
<path d="M1071.5 141 h9 l-4.5 -4 z" fill="#8a8a8a"/>
<rect x="1069.5" y="754.5" width="13" height="14" fill="#f7f7f7" stroke="#d0d0d0" stroke-width="1"/>
<path d="M1071.5 759 h9 l-4.5 4 z" fill="#8a8a8a"/>
<rect x="1069.5" y="327.5" width="13" height="15" fill="#fafafa" stroke="#d0d0d0" stroke-width="1"/>
<rect x="2" y="128" width="1081" height="4" fill="url(#rshadow)"/>
<rect x="2" y="770" width="1081" height="20" fill="#f3f2f1" />
<line x1="2" y1="770.5" x2="1083" y2="770.5" stroke="#d9d9d9" stroke-width="1" />
<text x="10" y="784" font-size="11.5" fill="#444" font-weight="normal" style="font-family:&quot;Liberation Sans&quot;" textLength="75.3" lengthAdjust="spacingAndGlyphs" >Page 32 of 876</text>
<text x="103.8" y="784" font-size="11.5" fill="#444" font-weight="normal" style="font-family:&quot;Liberation Sans&quot;" textLength="65.1" lengthAdjust="spacingAndGlyphs" >86290 words</text>
<path d="M194.5 786 h-6 v-10.5 h6 v10.5 M194.5 775.5 h6 v5.5" fill="none" stroke="#555" stroke-width="1"/>
<path d="M195.5 781.5 l6 6 M201.5 781.5 l-6 6" fill="none" stroke="#555" stroke-width="1.1"/>
<text x="220.4" y="784" font-size="11.5" fill="#444" font-weight="normal" style="font-family:&quot;Liberation Sans&quot;" textLength="115.6" lengthAdjust="spacingAndGlyphs" >English (United States)</text>
<path d="M721.5 776 v-2.5 h2.5 M733 773.5 h2.5 v2.5 M721.5 785 v2.5 h2.5 M733 787.5 h2.5 v-2.5" fill="none" stroke="#444" stroke-width="1"/>
<path d="M724.5 775.5 h6 l3 3 v7.5 h-9 z M730.5 775.5 v3 h3" fill="none" stroke="#444" stroke-width="1"/>
<text x="738" y="784.8" font-size="11.5" fill="#444" font-weight="normal" style="font-family:&quot;Liberation Sans&quot;" textLength="29.0" lengthAdjust="spacingAndGlyphs" >Focus</text>
<path d="M793.5 775.5 h5 l1 1 l1 -1 h5 v10.5 h-5 l-1 1 l-1 -1 h-5 z M799.5 776.5 v10" fill="none" stroke="#444" stroke-width="1"/>
<line x1="795" y1="778.5" x2="798" y2="778.5" stroke="#666" stroke-width="0.8" />
<line x1="801" y1="778.5" x2="804" y2="778.5" stroke="#666" stroke-width="0.8" />
<line x1="795" y1="781.0" x2="798" y2="781.0" stroke="#666" stroke-width="0.8" />
<line x1="801" y1="781.0" x2="804" y2="781.0" stroke="#666" stroke-width="0.8" />
<line x1="795" y1="783.5" x2="798" y2="783.5" stroke="#666" stroke-width="0.8" />
<line x1="801" y1="783.5" x2="804" y2="783.5" stroke="#666" stroke-width="0.8" />
<rect x="820" y="771" width="40" height="19" fill="#c8c6c4" />
<rect x="834.5" y="774.5" width="11" height="13" fill="#fafafa" stroke="#333" stroke-width="1.1"/>
<line x1="836.5" y1="777.5" x2="843.5" y2="777.5" stroke="#444" stroke-width="0.9" />
<line x1="836.5" y1="780.0" x2="843.5" y2="780.0" stroke="#444" stroke-width="0.9" />
<line x1="836.5" y1="782.5" x2="843.5" y2="782.5" stroke="#444" stroke-width="0.9" />
<line x1="836.5" y1="785.0" x2="843.5" y2="785.0" stroke="#444" stroke-width="0.9" />
<rect x="873.5" y="774.5" width="12" height="11" fill="none" stroke="#444" stroke-width="1"/>
<line x1="875.5" y1="777.5" x2="880" y2="777.5" stroke="#666" stroke-width="0.8" />
<line x1="875.5" y1="780.0" x2="880" y2="780.0" stroke="#666" stroke-width="0.8" />
<line x1="875.5" y1="782.5" x2="880" y2="782.5" stroke="#666" stroke-width="0.8" />
<circle cx="883.5" cy="785" r="4" fill="#f3f2f1" stroke="#444" stroke-width="1"/>
<line x1="879.5" y1="785" x2="887.5" y2="785" stroke="#444" stroke-width="0.7" />
<ellipse cx="883.5" cy="785" rx="1.6" ry="4" fill="none" stroke="#444" stroke-width="0.7"/>
<line x1="906" y1="781.2" x2="913.5" y2="781.2" stroke="#444" stroke-width="1.1" />
<line x1="919" y1="781.2" x2="1019" y2="781.2" stroke="#a8a8a8" stroke-width="1" />
<rect x="936" y="775.6" width="5.5" height="11" fill="#6a6a6a" />
<line x1="969.5" y1="778.7" x2="969.5" y2="783.7" stroke="#a8a8a8" stroke-width="1" />
<line x1="1023.4" y1="781.2" x2="1031.6" y2="781.2" stroke="#444" stroke-width="1.1" />
<line x1="1027.5" y1="777.2" x2="1027.5" y2="785.2" stroke="#444" stroke-width="1.1" />
<text x="1044.7" y="784.5" font-size="11.5" fill="#444" font-weight="normal" style="font-family:&quot;Liberation Sans&quot;" textLength="21.3" lengthAdjust="spacingAndGlyphs" >41%</text>
</svg>
</body></html>
